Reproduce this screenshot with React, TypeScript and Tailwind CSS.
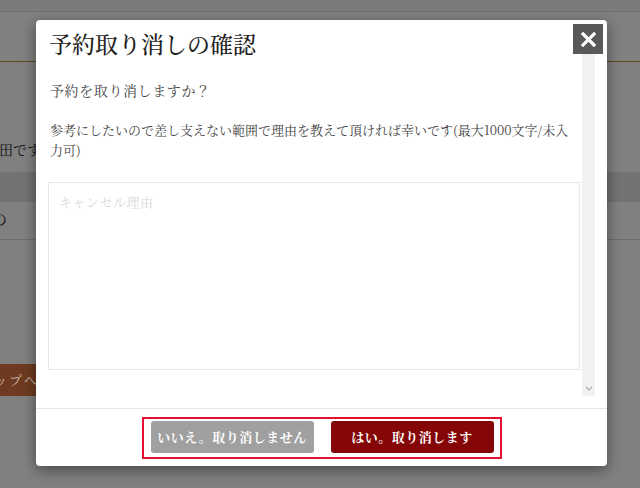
export default function App() {
  return (
    <div className="relative w-[640px] h-[488px] overflow-hidden bg-[#808080] font-['Noto_Serif_CJK_JP','Noto_Sans_CJK_JP',serif]">
      {/* underlying page (dimmed) */}
      <div className="h-[12px] bg-[#7b7b7b] border-b border-[#717171]" />
      <div className="mt-[49px] h-px bg-[#5e4719]" />
      <div className="mt-[75px] h-[24px] leading-[24px] text-[14px] text-[#111] whitespace-nowrap -ml-[1px]">田です</div>
      <div className="mt-[11px] h-[30px] bg-[#737373]" />
      <div className="mt-[7px] h-[20px] leading-[20px] text-[15px] text-[#111] -ml-[8px] whitespace-nowrap">の</div>
      <div className="mt-[10px] h-px bg-[#6e6e6e]" />
      <div className="mt-[124px] h-[32px] w-[60px] bg-[#6e3a20] text-[#cdb8aa] text-[13px] leading-[32px] tracking-[2px] whitespace-nowrap overflow-hidden">
        <span className="-ml-[6px] inline-block">ップへ</span>
      </div>

      {/* overlay */}
      <div className="absolute inset-0">
        <div className="absolute left-[36px] top-[20px] w-[571px] h-[446px] bg-white rounded-[4px] shadow-[0_4px_14px_rgba(0,0,0,0.45)] flex flex-col">
          <button className="absolute right-[4px] top-[4px] w-[30px] h-[30px] bg-[#595959] flex items-center justify-center">
            <svg width="15" height="15" viewBox="0 0 15 15">
              <path d="M2 2 L13 13 M13 2 L2 13" stroke="#fff" strokeWidth="3.2" strokeLinecap="square" />
            </svg>
          </button>

          <div className="flex h-[376px] pt-[4px]">
            <div className="flex-1 pl-[12px] pr-[2px]">
              <h2 className="pt-[5px] pl-[1px] text-[23px] leading-[30px] text-[#1e1e1e] font-medium">予約取り消しの確認</h2>
              <p className="mt-[21px] pl-[2px] text-[14px] leading-[20px] text-[#444] tracking-[0.6px]">予約を取り消しますか？</p>
              <p className="mt-[20px] pl-[2px] text-[13px] leading-[20px] text-[#444] tracking-[0px] whitespace-nowrap">
                参考にしたいので差し支えない範囲で理由を教えて頂ければ幸いです(最大1000文字/未入
                <br />
                力可)
              </p>
              <textarea
                placeholder="キャンセル理由"
                className="mt-[22px] block w-full h-[188px] border border-[#e6e6e6] px-[10px] py-[9px] text-[13px] leading-[20px] tracking-[0.5px] resize-none outline-none placeholder:text-[#d9d9d9] font-['Noto_Serif_CJK_JP','Noto_Sans_CJK_JP',serif]"
              />
            </div>
            <div className="w-[13px] mr-[12px] bg-[#f1f1f1] flex flex-col justify-end items-center pb-[5px]">
              <svg width="8" height="5" viewBox="0 0 8 5">
                <path d="M1 1 L4 4 L7 1" stroke="#a8a8a8" strokeWidth="1.2" fill="none" />
              </svg>
            </div>
          </div>

          <div className="mt-[12px] h-[58px] border-t border-[#e5e5e5] flex items-center justify-center">
            <div className="border-2 border-[#e3102f] flex gap-[17px] pl-[7px] pr-[6px] pt-[2px] pb-[4px]">
              <button className="w-[163px] h-[32px] rounded-[3px] bg-[#a0a0a0] text-white text-[13px] font-bold tracking-[0.5px]">いいえ。取り消しません</button>
              <button className="w-[163px] h-[32px] rounded-[3px] bg-[#850606] text-white text-[13px] font-bold tracking-[0.5px]">はい。取り消します</button>
            </div>
          </div>
        </div>
      </div>
    </div>
  );
}
